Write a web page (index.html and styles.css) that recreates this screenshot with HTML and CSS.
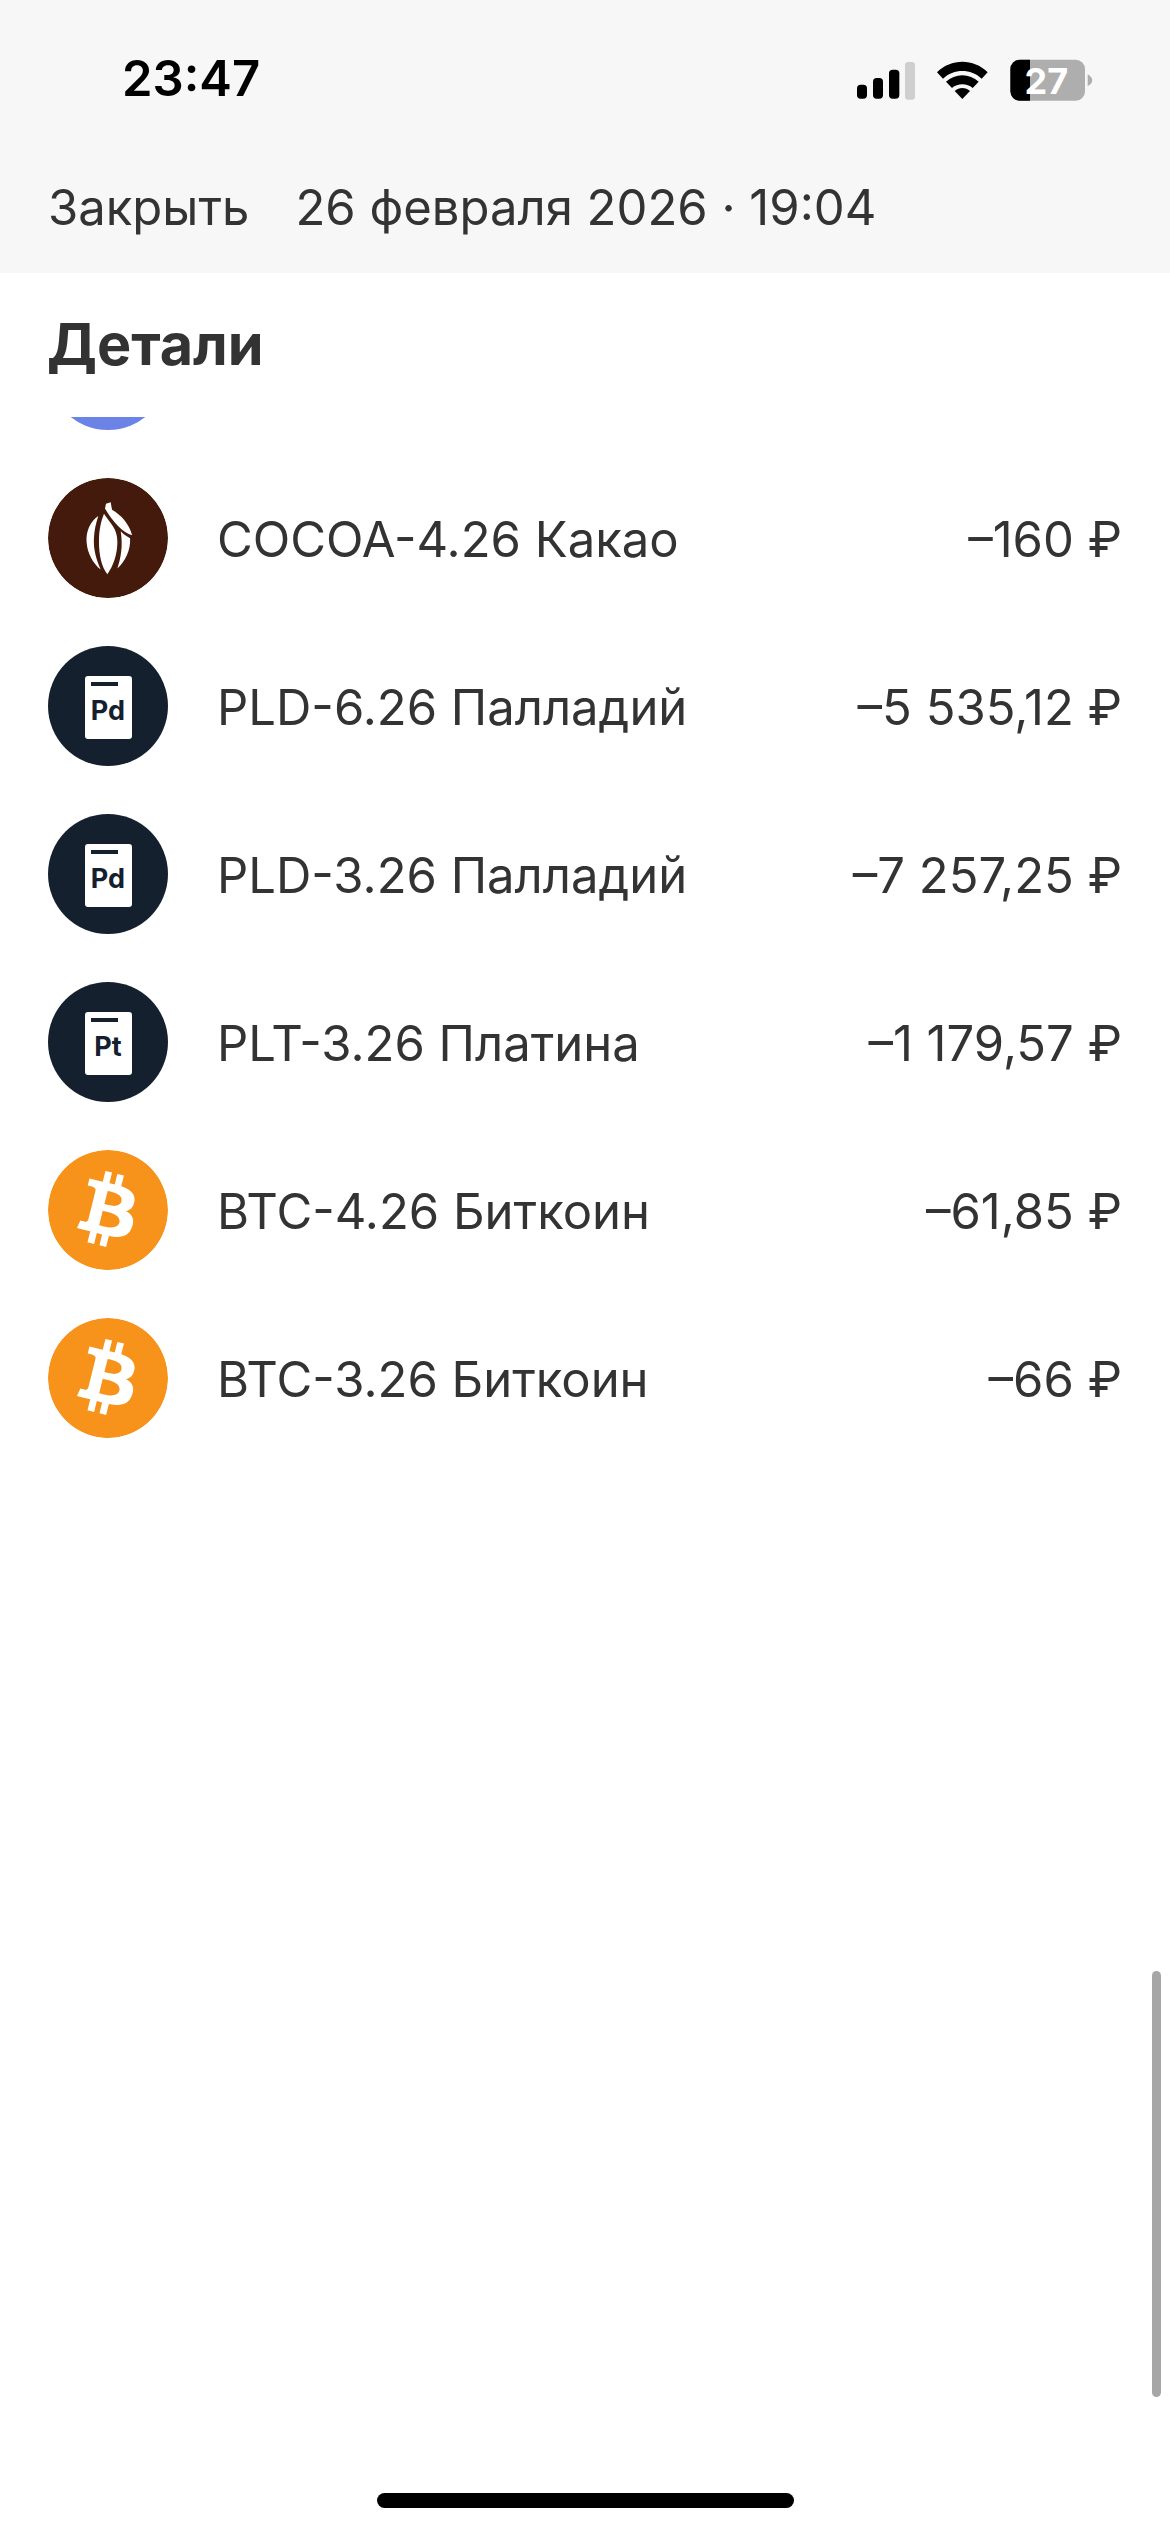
FILE: index.html
```html
<!DOCTYPE html>
<html lang="ru">
<head>
<meta charset="utf-8">
<title>Детали</title>
<link rel="stylesheet" href="styles.css">
</head>
<body>
<div class="screen">
  <header class="top">
    <div class="status">
      <span class="time">23:47</span>
      <svg class="status-icons" viewBox="0 0 960 300" width="320" height="100">
        <rect x="168" y="155" width="30" height="42" rx="11" fill="#000"/>
        <rect x="216" y="135" width="30" height="62" rx="11" fill="#000"/>
        <rect x="264" y="110" width="31" height="87" rx="11" fill="#000"/>
        <rect x="312" y="87" width="30" height="113" rx="9" fill="#cfcfcf"/>
        <path d="M408 118 C 450 76 518 76 560 118 L 542 137 C 510 106 458 106 426 137 Z" fill="#000"/>
        <path d="M435 146 C 462 120 506 120 533 146 L 515 165 C 498 150 470 150 453 165 Z" fill="#000"/>
        <path d="M461 174 C 474 162 494 162 507 174 L 484 198 Z" fill="#000"/>
        <rect x="628" y="80" width="224" height="123" rx="28" fill="#aeaeae"/>
        <path d="M687 80 H656 A28 28 0 0 0 628 108 V175 A28 28 0 0 0 656 203 H687 Z" fill="#000"/>
        <path d="M860 124 C 870 130 876 138 873 146 C 871 152 866 156 860 159 Z" fill="#aeaeae"/>
        <text class="battery-num" x="736" y="183" text-anchor="middle">27</text>
      </svg>
    </div>
    <nav class="nav">
      <span class="close">Закрыть</span>
      <span class="date">26 февраля 2026 · 19:04</span>
    </nav>
  </header>

  <main class="content">
    <h1 class="title">Детали</h1>
    <div class="list-clip">
      <ul class="list">
        <li class="row">
          <span class="avatar avatar-blue"></span>
          <span class="name"></span>
          <span class="amount"></span>
        </li>
        <li class="row">
          <svg class="avatar" viewBox="55 55 358 358">
            <circle cx="234" cy="234" r="179" fill="#431a0b"/>
            <path d="M205 168 C180 185 168 215 170 245 C172 280 190 310 212 328 C200 300 190 270 192 235 C193 210 198 190 205 168Z" fill="#fff"/>
            <path d="M222 162 C240 190 262 205 262 245 C262 285 248 320 232 342 C215 320 207 285 207 245 C207 210 213 185 222 162Z" fill="#fff"/>
            <path d="M228 132 L242 127 L246 150 C272 165 296 190 306 226 C280 220 245 182 225 146Z" fill="#fff"/>
            <path d="M272 214 C282 225 292 230 300 235 C302 270 285 305 262 325 C272 295 279 260 272 214Z" fill="#fff"/>
          </svg>
          <span class="name">COCOA-4.26 Какао</span>
          <span class="amount">–160 ₽</span>
        </li>
        <li class="row">
          <span class="avatar avatar-metal"><span class="card"><span class="card-bar"></span><span class="card-text">Pd</span></span></span>
          <span class="name">PLD-6.26 Палладий</span>
          <span class="amount">–5 535,12 ₽</span>
        </li>
        <li class="row">
          <span class="avatar avatar-metal"><span class="card"><span class="card-bar"></span><span class="card-text">Pd</span></span></span>
          <span class="name">PLD-3.26 Палладий</span>
          <span class="amount">–7 257,25 ₽</span>
        </li>
        <li class="row">
          <span class="avatar avatar-metal"><span class="card"><span class="card-bar"></span><span class="card-text">Pt</span></span></span>
          <span class="name">PLT-3.26 Платина</span>
          <span class="amount">–1 179,57 ₽</span>
        </li>
        <li class="row">
          <svg class="avatar" viewBox="0 0 24 24"><circle cx="12" cy="12" r="11.9" fill="#fff"/><path fill="#f7931a" d="M23.638 14.904c-1.602 6.43-8.113 10.34-14.542 8.736C2.67 22.05-1.244 15.525.362 9.105 1.962 2.67 8.475-1.243 14.9.358c6.43 1.605 10.342 8.115 8.738 14.548v-.002zm-6.35-4.613c.24-1.59-.974-2.45-2.64-3.03l.54-2.153-1.315-.33-.525 2.107c-.345-.087-.705-.167-1.064-.25l.526-2.127-1.32-.33-.54 2.165c-.285-.067-.565-.132-.84-.2l-1.815-.45-.35 1.407s.975.225.955.236c.535.136.63.486.615.766l-1.477 5.92c-.075.166-.24.406-.614.314.015.02-.96-.24-.96-.24l-.66 1.51 1.71.426.93.242-.54 2.19 1.32.327.54-2.17c.36.1.705.19 1.05.273l-.51 2.154 1.32.33.545-2.19c2.24.427 3.93.257 4.64-1.774.57-1.637-.03-2.58-1.217-3.196.854-.193 1.5-.76 1.68-1.93h.01zm-3.01 4.22c-.404 1.64-3.157.75-4.05.53l.72-2.9c.896.23 3.757.67 3.33 2.37zm.41-4.24c-.37 1.49-2.662.735-3.405.55l.654-2.64c.744.18 3.137.524 2.75 2.084v.006z"/></svg>
          <span class="name">BTC-4.26 Биткоин</span>
          <span class="amount">–61,85 ₽</span>
        </li>
        <li class="row">
          <svg class="avatar" viewBox="0 0 24 24"><circle cx="12" cy="12" r="11.9" fill="#fff"/><path fill="#f7931a" d="M23.638 14.904c-1.602 6.43-8.113 10.34-14.542 8.736C2.67 22.05-1.244 15.525.362 9.105 1.962 2.67 8.475-1.243 14.9.358c6.43 1.605 10.342 8.115 8.738 14.548v-.002zm-6.35-4.613c.24-1.59-.974-2.45-2.64-3.03l.54-2.153-1.315-.33-.525 2.107c-.345-.087-.705-.167-1.064-.25l.526-2.127-1.32-.33-.54 2.165c-.285-.067-.565-.132-.84-.2l-1.815-.45-.35 1.407s.975.225.955.236c.535.136.63.486.615.766l-1.477 5.92c-.075.166-.24.406-.614.314.015.02-.96-.24-.96-.24l-.66 1.51 1.71.426.93.242-.54 2.19 1.32.327.54-2.17c.36.1.705.19 1.05.273l-.51 2.154 1.32.33.545-2.19c2.24.427 3.93.257 4.64-1.774.57-1.637-.03-2.58-1.217-3.196.854-.193 1.5-.76 1.68-1.93h.01zm-3.01 4.22c-.404 1.64-3.157.75-4.05.53l.72-2.9c.896.23 3.757.67 3.33 2.37zm.41-4.24c-.37 1.49-2.662.735-3.405.55l.654-2.64c.744.18 3.137.524 2.75 2.084v.006z"/></svg>
          <span class="name">BTC-3.26 Биткоин</span>
          <span class="amount">–66 ₽</span>
        </li>
      </ul>
    </div>
  </main>

  <div class="scrollbar"></div>
  <div class="home-indicator"></div>
</div>
</body>
</html>
```

FILE: styles.css
```css
* { box-sizing: border-box; }
html, body { margin: 0; padding: 0; background: #fff; }
body { font-family: Inter, "Liberation Sans", sans-serif; color: #333; }
.screen { position: relative; width: 1170px; height: 2532px; overflow: hidden; background: #fff; }

.top { background: #f7f7f7; height: 273px; }
.status { height: 160px; display: flex; align-items: center; justify-content: space-between; padding: 0 49px 4px 122px; }
.time { font-size: 49px; font-weight: 600; color: #000; line-height: 1; }
.status-icons { display: block; margin-top: 10px; }
.battery-num { font-family: Inter, sans-serif; font-size: 108px; font-weight: 700; fill: #fff; }

.nav { display: flex; gap: 46px; padding: 19px 48px 0; font-size: 49px; line-height: 58px; color: #333; }

.content { display: flex; flex-direction: column; }
.title { margin: 0; padding: 37px 47px 0; height: 144px; font-size: 57.5px; line-height: 68px; font-weight: 700; color: #333; }

.list-clip { height: 1100px; overflow: hidden; }
.list { list-style: none; margin: -107px 0 0; padding: 0 48px; }
.row { display: flex; align-items: center; height: 120px; margin-bottom: 48px; font-size: 49px; line-height: 58px; }
.avatar { flex: none; display: flex; align-items: center; justify-content: center; width: 120px; height: 120px; border-radius: 50%; margin-right: 49px; }
.avatar-blue { background: #6b82e6; }
.avatar-metal { background: #15202f; }
.name { flex: 1; padding-top: 4px; }
.amount { padding-top: 4px; white-space: nowrap; }

.card { display: block; position: relative; width: 47px; height: 63px; margin-top: 3px; background: #fff; border-radius: 3px; color: #15202f; text-align: center; }
.card-bar { display: block; width: 27px; height: 4px; margin: 6px 0 0 6px; background: #15202f; position: absolute; top: 0; left: 0; }
.card-text { display: block; padding-top: 18px; font-size: 27px; line-height: 33px; font-weight: 700; }

.scrollbar { position: absolute; left: 1152px; top: 1971px; width: 9px; height: 426px; border-radius: 5px; background: #a6a6a6; }
.home-indicator { position: absolute; left: 377px; top: 2493px; width: 417px; height: 15px; border-radius: 8px; background: #000; }
```
